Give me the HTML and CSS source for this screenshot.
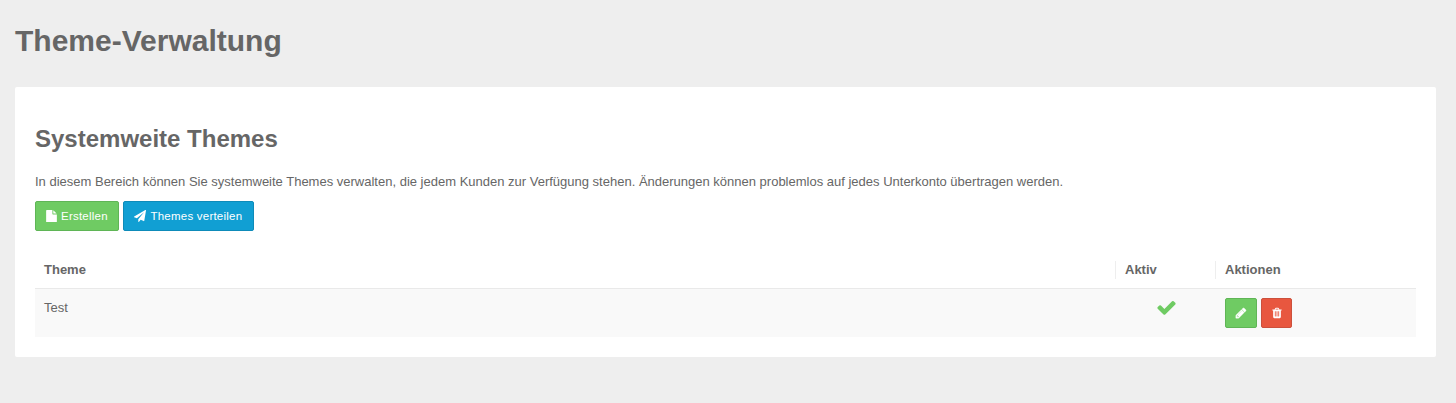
FILE: index.html
```html
<!DOCTYPE html>
<html lang="de">
<head>
<meta charset="utf-8">
<title>Theme-Verwaltung</title>
<link rel="stylesheet" href="styles.css">
</head>
<body>
<h1 class="page-title">Theme-Verwaltung</h1>
<main class="panel">
  <h2 class="panel-title">Systemweite Themes</h2>
  <p class="intro">In diesem Bereich können Sie systemweite Themes verwalten, die jedem Kunden zur Verfügung stehen. Änderungen können problemlos auf jedes Unterkonto übertragen werden.</p>
  <div class="toolbar">
    <button class="btn btn-green btn-create"><svg class="icon icon-file" viewBox="0 0 1536 1792"><path d="M1024 512v-472q22 14 36 28l408 408q14 14 28 36h-472zm-128 32q0 40 28 68t68 28h544v1056q0 40-28 68t-68 28h-1344q-40 0-68-28t-28-68v-1600q0-40 28-68t68-28h800v544z"/></svg><span>Erstellen</span></button>
    <button class="btn btn-blue btn-share"><svg class="icon icon-plane" viewBox="0 0 1792 1792"><path d="M1764 11q33 24 27 64l-256 1536q-5 29-32 45-14 8-31 8-11 0-24-5l-453-185-242 295q-18 23-49 23-13 0-22-4-19-7-30.5-23.5t-11.5-36.5v-349l864-1059-1069 925-395-162q-37-14-40-55-2-40 32-59l1664-960q15-9 32-9 20 0 36 11z"/></svg><span>Themes verteilen</span></button>
  </div>
  <div class="table">
    <div class="row head">
      <div class="cell">Theme</div>
      <div class="cell divided">Aktiv</div>
      <div class="cell divided">Aktionen</div>
    </div>
    <div class="row body">
      <div class="cell">Test</div>
      <div class="cell active"><svg class="check" viewBox="0 0 1792 1792"><path d="M1671 566q0 40-28 68l-724 724-136 136q-28 28-68 28t-68-28l-136-136-362-362q-28-28-28-68t28-68l136-136q28-28 68-28t68 28l294 295 656-657q28-28 68-28t68 28l136 136q28 28 28 68z"/></svg></div>
      <div class="cell actions">
        <button class="btn btn-green btn-edit" aria-label="Bearbeiten"><svg class="icon icon-pencil" viewBox="0 0 1792 1792"><path d="M491 1536l91-91-235-235-91 91v107h128v128h107zm523-928q0-22-22-22-10 0-17 7l-542 542q-7 7-7 17 0 22 22 22 10 0 17-7l542-542q7-7 7-17zm-54-192l416 416-832 832h-416v-416zm683 96q0 53-37 90l-166 166-416-416 166-165q36-38 90-38 53 0 91 38l235 234q37 39 37 91z"/></svg></button>
        <button class="btn btn-red btn-delete" aria-label="Löschen"><svg class="icon" viewBox="0 0 1792 1792"><path d="M704 1376v-704q0-14-9-23t-23-9h-64q-14 0-23 9t-9 23v704q0 14 9 23t23 9h64q14 0 23-9t9-23zm256 0v-704q0-14-9-23t-23-9h-64q-14 0-23 9t-9 23v704q0 14 9 23t23 9h64q14 0 23-9t9-23zm256 0v-704q0-14-9-23t-23-9h-64q-14 0-23 9t-9 23v704q0 14 9 23t23 9h64q14 0 23-9t9-23zm-544-992h448l-48-117q-7-9-17-11h-317q-10 2-17 11zm928 32v64q0 14-9 23t-23 9h-96v948q0 83-47 143.5t-113 60.5h-832q-66 0-113-58.5t-47-141.5v-952h-96q-14 0-23-9t-9-23v-64q0-14 9-23t23-9h309l70-167q15-37 54-63t79-26h320q40 0 79 26t54 63l70 167h309q14 0 23 9t9 23z"/></svg></button>
      </div>
    </div>
  </div>
</main>
</body>
</html>
```
FILE: styles.css
```css
* { box-sizing: border-box; }
body {
  margin: 0;
  padding: 23px 20px 0 15px;
  background: #eee;
  color: #666;
  font: 13px/20px "Liberation Sans", Arial, sans-serif;
}
.page-title { margin: 0 0 28px; font-size: 30px; line-height: 36px; }
.panel { height: 270px; padding: 36px 20px 20px; background: #fff; border-radius: 2px; }
.panel-title { margin: 0 0 18px; font-size: 24px; line-height: 31px; }
.intro { margin: 0 0 9px; white-space: nowrap; }
.toolbar { display: flex; gap: 4px; margin-bottom: 20px; }
.btn {
  display: flex;
  align-items: center;
  justify-content: center;
  height: 30px;
  padding: 0;
  border: 1px solid;
  border-radius: 2px;
  color: #fff;
  font: 11.49px/18px "Liberation Sans", Arial, sans-serif;
  letter-spacing: 0.23px;
}
.btn-green { background: #6fcb63; border-color: #5fb556; }
.btn-blue { background: #119fd3; border-color: #0e8bb9; }
.btn-red { background: #e8573f; border-color: #cc503c; }
.btn-create, .btn-share { justify-content: flex-start; padding-left: 10px; }
.btn-create { width: 84px; gap: 4px; }
.btn-share { width: 131px; gap: 4.5px; }
.btn-edit { width: 32px; }
.btn-delete { width: 31px; }
.icon { width: 12px; height: 12px; fill: currentColor; }
.icon-file { width: 11px; height: 12.5px; }
.icon-pencil { stroke: currentColor; stroke-width: 60; }
.row { display: grid; grid-template-columns: 1080px 100px 1fr; }
.head { height: 38px; padding-top: 10px; border-bottom: 1px solid #e9e9e9; font-weight: bold; line-height: 18px; }
.cell { padding-left: 9px; }
.divided { height: 18px; border-left: 1px solid #eee; }
.body { height: 48px; padding-top: 9px; background: #f9f9f9; }
.active { display: flex; justify-content: center; padding: 0 0 0 2px; }
.check { width: 21px; height: 21px; margin-top: -1px; fill: #6fcb63; }
.actions { display: flex; gap: 4px; padding-left: 10px; }
```
